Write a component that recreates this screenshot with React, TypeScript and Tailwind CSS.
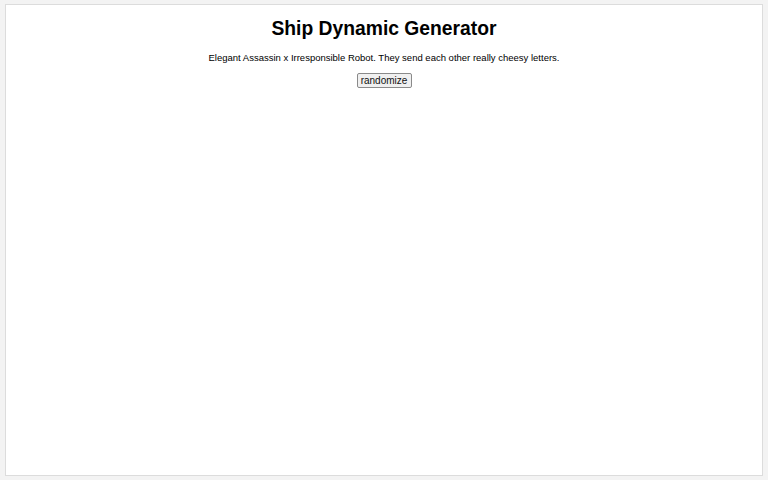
export default function App() {
  return (
    <div className="min-h-[480px] bg-[#f3f3f3] px-[5px] pt-[4px] pb-[4px]" style={{ fontFamily: '"Liberation Sans", Arial, sans-serif' }}>
      <div className="h-[472px] bg-white border border-[#dcdcdc] flex flex-col items-center text-black">
        <h1 className="mt-[12px] text-[19.3px] font-bold leading-[23px]">Ship Dynamic Generator</h1>
        <p className="mt-[12px] text-[9.5px] leading-[12px]">
          Elegant Assassin x Irresponsible Robot. They send each other really cheesy letters.
        </p>
        <button className="mt-[9px] w-[55px] h-[15px] text-[10px] leading-[12px] border border-[#8a8a8a] rounded-[2px] bg-[#f0f0f0] text-[#111]">
          randomize
        </button>
      </div>
    </div>
  );
}
